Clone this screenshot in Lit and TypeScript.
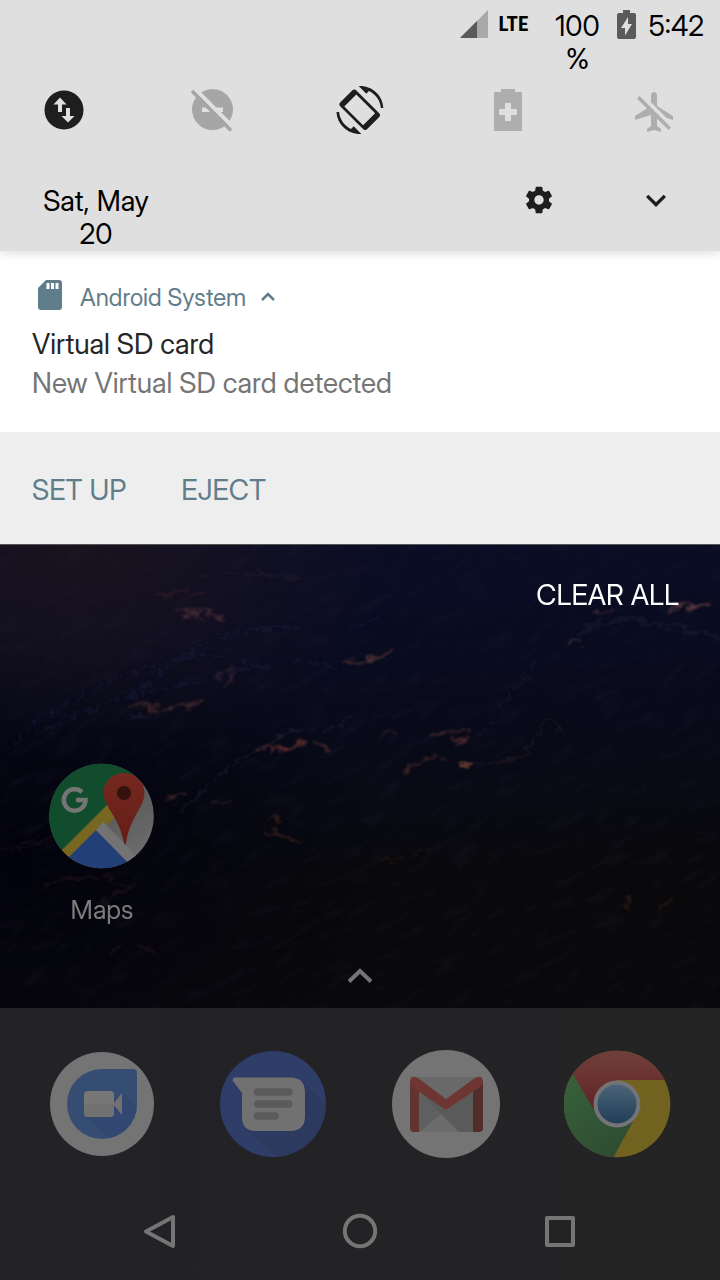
import { LitElement, html, css, svg } from "lit";
import { customElement } from "lit/decorators.js";

/* Lit ridges on the wallpaper terrain: path, colour, stroke width, opacity. */
const RIDGES: [string, string, number, number][] = [
  ["M150 52Q180 44 206 52M160 51L210 46", "#5a3038", 2, 0.3],
  ["M178 66Q196 62 208 68T224 72M184 69L204 73", "#75404a", 2, 0.6],
  ["M200 32Q240 24 300 36", "#3a2c3c", 4, 0.2],
  ["M342 118L356 117L370 112L382 111L394 106", "#9a5a48", 2, 0.6],
  ["M350 86Q362 74 380 73", "#2f2f52", 2, 0.4],
  ["M214 132Q222 122 230 124M224 140Q234 134 236 133", "#70404c", 2, 0.5],
  ["M128 164Q140 154 148 163L170 164L186 160L202 157", "#7a4840", 2, 0.5],
  ["M124 174Q150 170 160 172", "#2c2c50", 3, 0.4],
  ["M12 200Q40 174 66 158T150 120T270 125", "#22244a", 2, 0.4],
  ["M40 188Q90 160 140 150T250 124T340 128", "#23264c", 2, 0.35],
  ["M130 152Q160 128 196 104T300 84", "#20224a", 2, 0.4],
  ["M256 208Q264 200 274 206L298 200M282 207L302 198", "#a04c40", 2, 0.6],
  ["M310 196Q324 200 330 208", "#8e4c48", 2, 0.5],
  ["M258 206Q290 182 312 186T352 170", "#3c2c44", 2, 0.5],
  ["M380 194Q388 184 396 190", "#80463c", 2, 0.5],
  ["M404 228Q416 214 438 212", "#804036", 2, 0.5],
  ["M450 196L462 196L458 202L470 192M430 190Q450 186 470 188", "#a05048", 2, 0.5],
  ["M461 220L472 218", "#f08050", 3, 0.8],
  ["M436 212Q470 222 500 218T540 186T560 190", "#4a3030", 2, 0.4],
  ["M480 190Q500 170 512 140M516 144Q526 126 534 118", "#353349", 2, 0.3],
  ["M666 66Q682 58 690 62L712 58", "#a86058", 3, 0.5],
  ["M566 98L580 99M592 68L612 66", "#9a5a58", 2, 0.5],
  ["M580 90Q610 70 640 76T720 92", "#253242", 5, 0.3],
  ["M210 258L230 260M166 254L188 248", "#995040", 2, 0.4],
  ["M268 274L282 276M272 284L280 285M262 288Q280 290 300 298", "#8a4c38", 2, 0.45],
  ["M180 266Q200 250 222 230T262 200", "#2e2a40", 2, 0.5],
  ["M0 306Q30 304 56 288", "#4c2c34", 2, 0.4],
  ["M44 344Q90 320 132 344M100 360Q120 340 136 348", "#5c3234", 2, 0.3],
  ["M110 410Q130 390 160 412", "#4c2c2a", 2, 0.3],
  ["M370 310Q400 322 430 304", "#4c3024", 2, 0.35],
  ["M626 364L632 352M660 366Q668 360 672 354", "#804828", 3, 0.25],
  ["M680 290L702 288M690 204L696 212", "#5c3428", 2, 0.25],
];

@customElement("app-root")
export class AppRoot extends LitElement {
  static styles = css`
    :host {
      display: flex;
      flex-direction: column;
      min-height: 100vh;
      background: #08080c;
      font-family: "Inter Display", Inter, "Liberation Sans", sans-serif;
      font-variation-settings: "opsz" 32;
      font-size: 28px;
      line-height: 33px;
      color: #000;
    }
    * {
      box-sizing: border-box;
    }
    svg {
      display: block;
      flex: none;
    }
    button {
      display: block;
      margin: 0;
      padding: 0;
      border: 0;
      background: none;
      color: inherit;
      font: inherit;
      font-variation-settings: inherit;
      cursor: pointer;
    }
    .shade {
      background: #dfdfdf;
      position: relative;
      box-shadow: 0 2px 10px rgba(0, 0, 0, 0.14);
    }
    .status {
      display: flex;
      justify-content: flex-end;
      align-items: flex-start;
      padding: 10px 16px 10px 0;
    }
    .lte {
      margin: -2px 0 0 11px;
      font-family: "Roboto Condensed", "Liberation Sans Narrow", "Roboto",
        sans-serif;
      font-weight: 700;
      font-size: 21px;
    }
    .percent {
      margin: 0 17px 0 27px;
      text-align: center;
    }
    .clock {
      margin-left: 13px;
    }
    .tiles {
      display: flex;
      justify-content: space-between;
      padding: 0 40px;
    }
    .footer {
      display: flex;
      align-items: flex-start;
      padding: 46px 44px 0 36px;
    }
    .date {
      width: 120px;
      margin-top: 5px;
      text-align: center;
    }
    .settings {
      margin: 4px 0 0 auto;
    }
    .expand {
      margin: 2px 0 0 81px;
    }
    .note {
      background: #fff;
      padding: 29px 32px 32px;
    }
    .app {
      display: flex;
      align-items: center;
      height: 34px;
      color: #607d8b;
      font-size: 24px;
    }
    .app span {
      margin: 0 14px 0 12px;
    }
    .title {
      margin: 14px 0 6px;
      color: #262626;
      font-size: 28px;
      font-weight: 400;
    }
    .body {
      margin: 0;
      color: #757575;
    }
    .actions {
      display: flex;
      gap: 55px;
      padding: 42px 32px 37px;
      background: #eee;
      color: #607d8b;
    }
    .home {
      flex: 1;
      position: relative;
      display: flex;
      flex-direction: column;
      overflow: hidden;
      border-top: 1px solid #555;
    }
    .wallpaper {
      position: absolute;
      inset: 0;
      width: 100%;
      height: 100%;
    }
    .content {
      position: relative;
      display: flex;
      flex: 1;
      flex-direction: column;
    }
    .clear {
      align-self: flex-end;
      margin: 34px 41px 0 0;
      color: #fff;
    }
    .launcher {
      width: 108px;
      margin: 150px 0 0 48px;
      color: #7c7c7c;
      font-size: 26px;
    }
    .launcher span {
      display: block;
      margin-top: 23px;
    }
    .drawer {
      margin: auto auto 16px;
    }
    .dock {
      background: linear-gradient(90deg, #222227, #242425);
    }
    .apps {
      display: flex;
      justify-content: space-between;
      padding: 42px 48px 0;
    }
    .nav {
      display: flex;
      justify-content: space-between;
      padding: 49px 136px 25px;
    }
  `;

  private tiles() {
    return html`
      <div class="tiles">
        <button aria-label="Mobile data">
          <svg width="48" height="48" viewBox="0 0 48 48">
            <circle cx="24" cy="24" r="19.500" fill="#1e1e1e" />
            <path
              fill="#dfdfdf"
              d="M20 11.500l6.500 7H22V26h-4v-7.500h-4.500zM28 36.500l-6.500-6.500H26v-8h4v8h4.500z"
            />
          </svg>
        </button>
        <button aria-label="Do not disturb">
          <svg width="48" height="48" viewBox="0 0 48 48">
            <circle cx="24.500" cy="23.500" r="20.500" fill="#a6a6a6" />
            <path fill="#dfdfdf" d="M14 21.500h21v4.500h-21z" />
            <path fill="none" stroke="#dfdfdf" stroke-width="4" d="M6 2L48 44" />
            <path fill="none" stroke="#a6a6a6" stroke-width="3.600" d="M4 5L43 44.500" />
          </svg>
        </button>
        <button aria-label="Auto-rotate">
          <svg width="48" height="48" viewBox="0 0 48 48" fill="#1e1e1e">
            <path
              fill-rule="evenodd"
              transform="translate(23.700 23.800) rotate(45)"
              d="M-16-11.300H16q3 0 3 3V8.300q0 3-3 3H-16q-3 0-3-3V-8.300q0-3 3-3zM-13.300-8.500V8.500H13.300V-8.500z"
            />
            <path
              transform="scale(2)"
              d="M16.480 2.520c3.270 1.550 5.610 4.720 5.970 8.480h1.200C23.440 4.840 18.290 0 12 0l-.66.03 3.810 3.810zM7.520 21.480C4.250 19.940 1.910 16.760 1.550 13H.25C.56 19.160 5.710 24 12 24l.66-.03-3.810-3.810z"
            />
          </svg>
        </button>
        <button aria-label="Battery saver">
          <svg width="48" height="48" viewBox="0 0 48 48">
            <path
              fill="#aeaeae"
              fill-rule="evenodd"
              d="M17 3h14v3h7v39H10V6h7zM21 17v6h-6v6h6v6h6v-6h6v-6h-6v-6z"
            />
          </svg>
        </button>
        <button aria-label="Airplane mode">
          <svg width="48" height="48" viewBox="0.500 -1 24 24">
            <path
              fill="#aeaeae"
              d="M13 9V3.500c0-.83-.67-1.500-1.500-1.500S10 2.670 10 3.500v3.680l7.830 7.830L21 16v-2l-8-5zM3 5.270l4.990 4.990L2 14v2l8-2.500V19l-2 1.500V22l3.500-1 3.500 1v-1.500L13 19v-3.730L18.730 21 20 19.730 4.270 4 3 5.270z"
            />
          </svg>
        </button>
      </div>
    `;
  }

  private wallpaper() {
    return html`
      <svg
        class="wallpaper"
        viewBox="0 0 720 464"
        preserveAspectRatio="xMidYMid slice"
        aria-hidden="true"
      >
        <defs>
          <linearGradient id="sky" x1="0.600" y1="0" x2="0.700" y2="1">
            <stop offset="0" stop-color="#0a0d26" />
            <stop offset="0.450" stop-color="#080a18" />
            <stop offset="0.700" stop-color="#09090c" />
            <stop offset="1" stop-color="#09080b" />
          </linearGradient>
          <radialGradient id="dusk" cx="0.100" cy="0" r="0.450">
            <stop offset="0" stop-color="#1a131e" />
            <stop offset="1" stop-color="#1a131e" stop-opacity="0" />
          </radialGradient>
          <radialGradient id="deep" cx="0" cy="0.700" r="0.550">
            <stop offset="0" stop-color="#02020c" />
            <stop offset="1" stop-color="#02020c" stop-opacity="0" />
          </radialGradient>
          <filter id="rough" x="0" y="0" width="720" height="464" filterUnits="userSpaceOnUse">
            <feTurbulence type="fractalNoise" baseFrequency="0.070 0.140" numOctaves="3" seed="4" />
            <feDisplacementMap in="SourceGraphic" scale="16" xChannelSelector="R" yChannelSelector="G" />
            <feGaussianBlur stdDeviation="0.900" />
          </filter>
          <filter id="grain" x="0" y="0" width="100%" height="100%" color-interpolation-filters="sRGB">
            <feTurbulence type="fractalNoise" baseFrequency="0.030 0.110" numOctaves="5" seed="9" />
            <feColorMatrix
              values="0 0 0 0 0.160  0 0 0 0 0.150  0 0 0 0 0.240  3 0 0 0 -1.500"
            />
          </filter>
        </defs>
        <rect width="720" height="464" fill="url(#sky)" />
        <rect width="720" height="464" fill="url(#deep)" />
        <rect width="720" height="464" fill="url(#dusk)" />
        <g transform="rotate(-28 360 232)" opacity="0.160">
          <rect x="-100" y="-160" width="920" height="800" filter="url(#grain)" />
        </g>
        <g fill="none" filter="url(#rough)">
          ${RIDGES.map(
            ([d, colour, width, opacity]) =>
              svg`<path d=${d} stroke=${colour} stroke-width=${width} opacity=${opacity} />`
          )}
        </g>
      </svg>
    `;
  }

  private maps() {
    return html`
      <svg width="108" height="108" viewBox="0 0 108 108">
        <defs>
          <clipPath id="disc"><circle cx="53.500" cy="54" r="52.300" /></clipPath>
          <linearGradient id="land" x1="0.500" y1="0" x2="1" y2="0.700">
            <stop offset="0" stop-color="#4b4b4b" />
            <stop offset="1" stop-color="#6a6a6a" />
          </linearGradient>
          <linearGradient id="pin" x1="0" y1="0" x2="0" y2="1">
            <stop offset="0" stop-color="#75291f" />
            <stop offset="1" stop-color="#641d17" />
          </linearGradient>
        </defs>
        <g clip-path="url(#disc)">
          <rect width="108" height="108" fill="url(#land)" />
          <path d="M0 0H100L10 98H0z" fill="#114d2d" />
          <path d="M62 40L5 97L15 107L69 53z" fill="#786720" />
          <path d="M48 68L90 110H6z" fill="#223f77" />
          <path d="M48 68L55 60L96 101L88 109z" fill="#737373" />
          <path
            d="M76 11c12 0 20.500 9 20.500 20 0 14-14 23-18.500 50q-1 3-2 0c-5-27-20.500-36-20.500-50 0-11 9-20 20.500-20z"
            fill="url(#pin)"
          />
          <circle cx="76" cy="31" r="7" fill="#35110f" />
        </g>
        <path
          d="M34 30A10.800 10.800 0 1 0 37.500 38H28"
          fill="none"
          stroke="#757575"
          stroke-width="4.500"
        />
      </svg>
    `;
  }

  private dock() {
    return html`
      <div class="apps">
        <button aria-label="Duo">
          <svg width="108" height="108" viewBox="0 0 108 108">
            <defs>
              <clipPath id="drop">
                <path d="M54 19H85q4 0 4 4V54A35 35 0 1 1 54 19z" />
              </clipPath>
            </defs>
            <circle cx="54" cy="54" r="52" fill="#747474" />
            <g clip-path="url(#drop)">
              <rect width="108" height="108" fill="#354c73" />
              <path d="M38 65L75 44L108 77V108H81z" fill="#324870" />
            </g>
            <rect x="36" y="41" width="30" height="26" rx="4" fill="#777" />
            <path d="M36 54H66V63q0 4-4 4H40q-4 0-4-4z" fill="#717171" />
            <path d="M65 54L74 43V65z" fill="#717171" />
          </svg>
        </button>
        <button aria-label="Messages">
          <svg width="108" height="108" viewBox="0 0 108 108">
            <defs>
              <clipPath id="ball"><circle cx="53" cy="54" r="53" /></clipPath>
            </defs>
            <circle cx="53" cy="54" r="53" fill="#2e3e68" />
            <path
              d="M26 78L83 32L108 57V108H57z"
              fill="#2c3a60"
              clip-path="url(#ball)"
            />
            <path
              d="M15 27.500H70q15 0 15 15V66q0 15-15 15H36q-14 0-14-14V43L13 31q-1-3 2-3.500z"
              fill="#717171"
            />
            <path
              d="M37.500 42H69M37.500 54H69M37.500 66H55"
              stroke="#5b5b5b"
              stroke-width="7.500"
              stroke-linecap="round"
            />
          </svg>
        </button>
        <button aria-label="Gmail">
          <svg width="108" height="108" viewBox="0 0 108 108">
            <circle cx="54" cy="54" r="54" fill="#747474" />
            <path d="M24 27H84V82H24z" fill="#696969" />
            <path d="M27 41L68 82H27z" fill="#5f5f5f" />
            <path d="M27 41L54 60L82 41V82H67z" fill="#5a5a5a" />
            <path d="M49 64L67 82H27z" fill="#6b6b6b" />
            <path d="M18 31L27 38V82H22q-4 0-4-4z" fill="#623331" />
            <path d="M91 31L81 38V82H87q4 0 4-4z" fill="#522d2b" />
            <path
              d="M18 32q0-8 8-4L54 49L83 28q8-4 8 4 0 3-3 5L54 60L20 37q-2-2-2-5z"
              fill="#6e3632"
            />
          </svg>
        </button>
        <button aria-label="Chrome">
          <svg width="108" height="108" viewBox="0 0 108 108">
            <defs>
              <clipPath id="wheel"><circle cx="53" cy="54" r="53.300" /></clipPath>
              <linearGradient id="red" x1="0" y1="0" x2="0" y2="1">
                <stop offset="0" stop-color="#70403b" />
                <stop offset="1" stop-color="#622326" />
              </linearGradient>
              <linearGradient id="green" x1="0" y1="0" x2="0.600" y2="1">
                <stop offset="0" stop-color="#3a653a" />
                <stop offset="1" stop-color="#2f4d33" />
              </linearGradient>
              <linearGradient id="lens" x1="0" y1="0" x2="0" y2="1">
                <stop offset="0" stop-color="#4c6478" />
                <stop offset="1" stop-color="#203e58" />
              </linearGradient>
            </defs>
            <g clip-path="url(#wheel)">
              <rect width="108" height="108" fill="#72621f" />
              <path d="M0 0L9 20L36 54L72 66L49 108H0z" fill="url(#green)" />
              <path d="M0 0H108V30H53L30 60L9 24z" fill="url(#red)" />
            </g>
            <circle cx="53" cy="54" r="23.500" fill="#747476" />
            <circle cx="53" cy="54" r="19.500" fill="url(#lens)" />
          </svg>
        </button>
      </div>
    `;
  }

  render() {
    return html`
      <header class="shade">
        <div class="status">
          <svg width="28" height="28" viewBox="0 0 28 28" role="img" aria-label="Signal">
            <path d="M28 0V28H0z" fill="#a9a9a9" />
            <path d="M17 11V28H0z" fill="#5a5a5a" />
          </svg>
          <span class="lte">LTE</span>
          <span class="percent">100<br />%</span>
          <svg width="19" height="29" viewBox="0 0 19 29" role="img" aria-label="Charging">
            <path
              fill="#5a5a5a"
              fill-rule="evenodd"
              d="M6 0h7v3h4q2 0 2 2V27q0 2-2 2H2q-2 0-2-2V5q0-2 2-2h4zM11 7L4 18h4v7.500L15 14h-4z"
            />
          </svg>
          <span class="clock">5:42</span>
        </div>
        ${this.tiles()}
        <div class="footer">
          <div class="date">Sat, May 20</div>
          <button class="settings" aria-label="Settings">
            <svg width="32" height="32" viewBox="0 0 24 24">
              <path
                fill="#1e1e1e"
                d="M19.430 12.980c.04-.32.07-.64.07-.98s-.03-.66-.07-.98l2.110-1.650c.19-.15.24-.42.12-.64l-2-3.460c-.12-.22-.39-.3-.61-.22l-2.490 1c-.52-.4-1.080-.73-1.690-.98l-.38-2.650C14.460 2.180 14.250 2 14 2h-4c-.25 0-.46.18-.49.42l-.38 2.650c-.61.25-1.170.59-1.690.98l-2.490-1c-.23-.09-.49 0-.61.22l-2 3.460c-.13.22-.07.49.12.64l2.110 1.650c-.04.32-.07.65-.07.98s.03.66.07.98l-2.110 1.650c-.19.15-.24.42-.12.64l2 3.460c.12.22.39.3.61.22l2.490-1c.52.4 1.080.73 1.690.98l.38 2.650c.03.24.24.42.49.42h4c.25 0 .46-.18.49-.42l.38-2.650c.61-.25 1.170-.59 1.690-.98l2.490 1c.23.09.49 0 .61-.22l2-3.460c.12-.22.07-.49-.12-.64l-2.110-1.650zM12 15.500c-1.930 0-3.500-1.570-3.500-3.500s1.570-3.500 3.500-3.500 3.500 1.570 3.500 3.500-1.570 3.500-3.500 3.500z"
              />
            </svg>
          </button>
          <button class="expand" aria-label="Expand quick settings">
            <svg width="40" height="40" viewBox="0 0 24 24">
              <path
                fill="#1e1e1e"
                d="M16.590 7.590L12 12.170 7.410 7.590 6 9l6 6 6-6z"
              />
            </svg>
          </button>
        </div>
      </header>

      <article class="note">
        <div class="app">
          <svg width="36" height="34" viewBox="0 0 36 34">
            <path
              fill="#607d8b"
              fill-rule="evenodd"
              d="M14 0H27q3 0 3 3V27q0 3-3 3H9q-3 0-3-3V8zM14.500 3v6h3v-6zM19 3v6h3v-6zM23.500 3v6h3v-6z"
            />
          </svg>
          <span>Android System</span>
          <svg width="16" height="12" viewBox="0 0 16 12">
            <path
              fill="none"
              stroke="#607d8b"
              stroke-width="2.500"
              d="M2 9L8 3L14 9"
            />
          </svg>
        </div>
        <h2 class="title">Virtual SD card</h2>
        <p class="body">New Virtual SD card detected</p>
      </article>
      <div class="actions">
        <button>SET UP</button>
        <button>EJECT</button>
      </div>

      <main class="home">
        ${this.wallpaper()}
        <div class="content">
          <button class="clear">CLEAR ALL</button>
          <button class="launcher">${this.maps()}<span>Maps</span></button>
          <button class="drawer" aria-label="All apps">
            <svg width="32" height="32" viewBox="0 0 32 32">
              <path
                fill="none"
                stroke="#757575"
                stroke-width="4"
                d="M5 21.500L16 11L27 21.500"
              />
            </svg>
          </button>
        </div>
      </main>

      <footer class="dock">
        ${this.dock()}
        <nav class="nav">
          <button aria-label="Back">
            <svg width="48" height="48" viewBox="0 0 48 48">
              <path
                fill="none"
                stroke="#757575"
                stroke-width="4"
                stroke-linejoin="round"
                d="M37 10V39L10 24.500z"
              />
            </svg>
          </button>
          <button aria-label="Home">
            <svg width="48" height="48" viewBox="0 0 48 48">
              <circle cx="24" cy="24" r="15.200" fill="none" stroke="#757575" stroke-width="4" />
            </svg>
          </button>
          <button aria-label="Recents">
            <svg width="48" height="48" viewBox="0 0 48 48">
              <rect
                x="11"
                y="11"
                width="26"
                height="27"
                fill="none"
                stroke="#757575"
                stroke-width="4"
                stroke-linejoin="round"
              />
            </svg>
          </button>
        </nav>
      </footer>
    `;
  }
}
